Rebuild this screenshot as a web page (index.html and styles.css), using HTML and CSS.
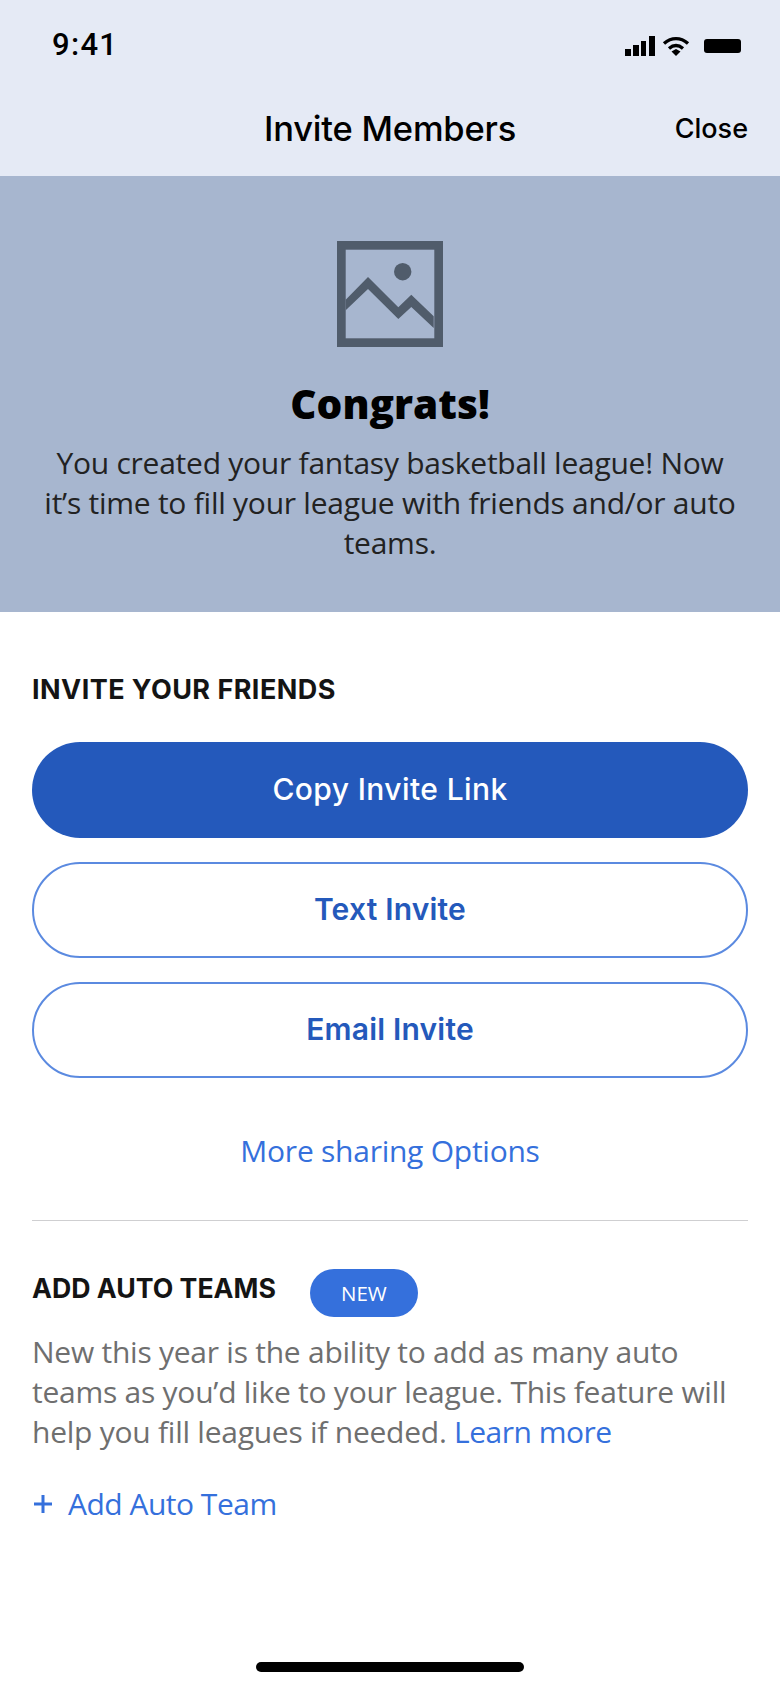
FILE: index.html
```html
<!DOCTYPE html>
<html lang="en">
<head>
<meta charset="utf-8">
<title>Invite Members</title>
<link rel="stylesheet" href="styles.css">
</head>
<body>
<div class="screen">
  <header class="top">
    <div class="status">
      <span class="time">9:41</span>
      <span class="status-icons">
        <svg class="ic-signal" width="30" height="20" viewBox="0 0 30 20"><rect x="0" y="13" width="6" height="7"/><rect x="8" y="9" width="6" height="11"/><rect x="16" y="5" width="5" height="15"/><rect x="24" y="0" width="6" height="20"/></svg>
        <svg class="ic-wifi" width="28" height="20" viewBox="0 0 28 20"><path d="M2 7.500C9.500 1 18.500 1 26 7.500" fill="none" stroke="#000" stroke-width="3.400"/><path d="M7 12.500C11.500 8.700 16.500 8.700 21 12.500" fill="none" stroke="#000" stroke-width="3.400"/><path d="M9.500 15.500 14 13 18.500 15.500 14 20Z"/></svg>
        <span class="battery"></span>
      </span>
    </div>
    <div class="nav">
      <h1 class="nav-title">Invite Members</h1>
      <span class="nav-close">Close</span>
    </div>
  </header>
  <section class="hero">
    <svg class="hero-icon" width="106" height="106" viewBox="0 0 106 106"><rect x="4.350" y="4.350" width="97.300" height="97.300" fill="none" stroke="#505c6b" stroke-width="8.700"/><circle cx="65.700" cy="30.700" r="8.700" fill="#505c6b"/><path d="M8.700 58.700 31 36 61.300 66.300 74.300 53.700 96.700 75.300V87L74.300 66 61.300 78 31 48 8.700 69.300Z" fill="#505c6b"/></svg>
    <h2 class="hero-title">Congrats!</h2>
    <p class="hero-text">You created your fantasy basketball league! Now it’s time to fill your league with friends and/or auto teams.</p>
  </section>
  <main class="content">
    <h3 class="label invite-label">INVITE YOUR FRIENDS</h3>
    <div class="buttons">
      <button class="btn btn-solid">Copy Invite Link</button>
      <button class="btn btn-outline">Text Invite</button>
      <button class="btn btn-outline">Email Invite</button>
    </div>
    <a class="more">More sharing Options</a>
    <hr class="rule">
    <div class="auto-head">
      <h3 class="label auto-label">ADD AUTO TEAMS</h3>
      <span class="pill">NEW</span>
    </div>
    <p class="auto-text">New this year is the ability to add as many auto teams as you’d like to your league. This feature will help you fill leagues if needed. <a class="link">Learn more</a></p>
    <a class="add">
      <svg width="18" height="18" viewBox="0 0 18 18"><path d="M9 0V18M0 9H18" stroke="#3570dc" stroke-width="3" fill="none"/></svg>
      <span>Add Auto Team</span>
    </a>
  </main>
  <div class="home-bar"></div>
</div>
</body>
</html>
```
FILE: styles.css
```css
* { box-sizing: border-box; }
html, body { margin: 0; padding: 0; }
body { background: #fff; font-family: "Open Sans", "Liberation Sans", sans-serif; color: #000; }
.screen { width: 780px; height: 1688px; display: flex; flex-direction: column; position: relative; overflow: hidden; }
.top { background: #e5eaf5; height: 176px; display: flex; flex-direction: column; }
.status { height: 88px; padding: 27px 39px 0 52px; display: flex; justify-content: space-between; align-items: flex-start; }
.time { font: 500 31px/36px Roboto, sans-serif; letter-spacing: 1.3px; }
.status-icons { display: flex; align-items: center; gap: 7px; margin-top: 9px; }
.battery { width: 37px; height: 14px; background: #000; border-radius: 3px; margin: 0 0 0 7px; }
.nav { height: 88px; position: relative; display: flex; align-items: center; justify-content: center; padding-bottom: 6px; }
.nav-title { margin: 0; font: 500 34.500px/40px Inter, sans-serif; letter-spacing: -0.2px; }
.nav-close { position: absolute; right: 32px; top: 23px; font: 500 27px/36px Inter, sans-serif; }
.hero { background: #a7b6cf; height: 436px; display: flex; flex-direction: column; align-items: center; padding-top: 65px; }
.hero-icon { display: block; }
.hero-title { margin: 32px 0 0; font: 800 40.500px/50px "Open Sans", sans-serif; }
.hero-text { margin: 14px 0 0; width: 700px; text-align: center; font: 400 30px/40px "Open Sans", sans-serif; letter-spacing: -0.25px; color: #222; }
.content { padding: 0 32px; flex: 1; display: flex; flex-direction: column; }
.label { margin: 0; font: 700 27px/36px Inter, sans-serif; color: #141414; }
.invite-label { margin-top: 60px; letter-spacing: 0.45px; }
.auto-label { font-size: 26.700px; margin-bottom: 10px; }
.buttons { display: flex; flex-direction: column; gap: 24px; margin-top: 34px; }
.btn { height: 96px; padding-bottom: 3px; border-radius: 48px; font: 500 30px/36px Inter, sans-serif; letter-spacing: 0.4px; width: 100%; }
.btn-solid { background: #2459bb; color: #fff; border: 0; }
.btn-outline { background: #fff; color: #2459bb; border: 2px solid #5b8ae0; font-weight: 600; letter-spacing: 0.2px; }
.more { margin-top: 52.600px; text-align: center; font: 400 30px/40px "Open Sans", sans-serif; letter-spacing: -0.25px; color: #3570dc; }
.rule { margin: 49px 0 0; height: 1px; border: 0; background: #cfcfd1; }
.auto-head { display: flex; align-items: center; gap: 34px; margin-top: 48px; }
.pill { width: 108px; height: 48px; border-radius: 24px; background: #3570dc; color: #fff; display: flex; align-items: center; justify-content: center; font: 400 20.500px/24px "Open Sans", sans-serif; }
.auto-text { margin: 15px 0 0; font: 400 30px/40px "Open Sans", sans-serif; letter-spacing: -0.25px; color: #6f6f6f; }
.link { color: #3570dc; letter-spacing: -0.5px; }
.add { margin-top: 32px; padding-left: 2px; display: flex; align-items: center; gap: 16px; font: 400 30px/40px "Open Sans", sans-serif; letter-spacing: -0.5px; color: #3570dc; }
.home-bar { position: absolute; left: 256px; bottom: 16px; width: 268px; height: 10px; border-radius: 5px; background: #000; }
```
